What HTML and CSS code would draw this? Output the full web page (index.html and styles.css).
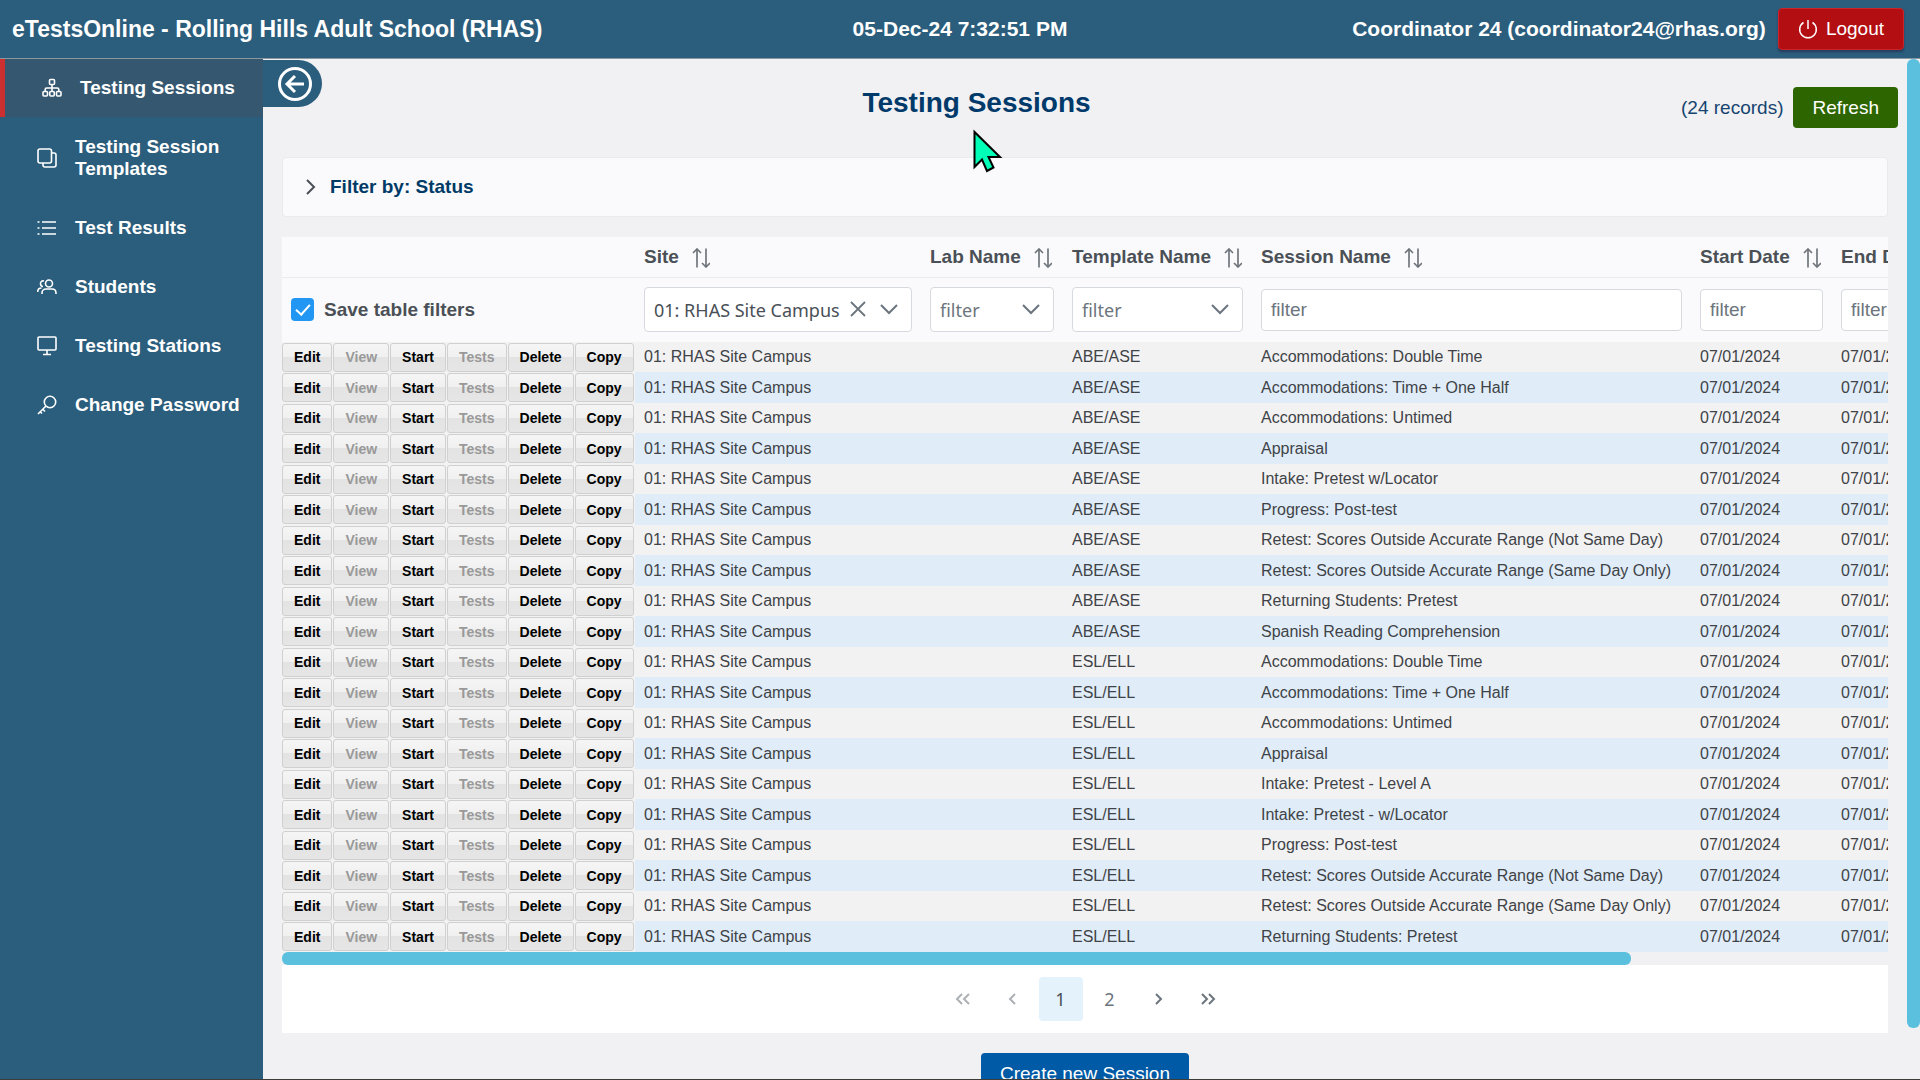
FILE: index.html
```html
<!DOCTYPE html>
<html lang="en">
<head>
  <meta charset="UTF-8" />
  <meta name="viewport" content="width=device-width, initial-scale=1.0"/>
  <title>Testing Sessions - eTestsOnline</title>
  <link rel="stylesheet" href="styles.css">
</head>
<body>
  <svg class="sprite" aria-hidden="true">
    <symbol id="i-sort" viewBox="0 0 18 20">
      <path d="M5 19.5V1M1 5l4-4 4 4M14 .5V19M10 15l4 4 4-4" />
    </symbol>
    <symbol id="i-down" viewBox="0 0 18 12">
      <path d="M1 2l8 8 8-8" />
    </symbol>
  </svg>

  <header class="topbar">
    <div class="brand">eTestsOnline - Rolling Hills Adult School (RHAS)</div>
    <div class="clock">05-Dec-24 7:32:51 PM</div>
    <div class="account">
      <span>Coordinator 24 (coordinator24@rhas.org)</span>
      <button type="button" class="btn logout-btn">
        <svg class="icon" width="20" height="20" viewBox="0 0 20 20"><path d="M10 1v9M5.500 3.500a8.300 8.300 0 1 0 9 0" /></svg>
        Logout
      </button>
    </div>
  </header>

  <div class="layout">
    <nav class="sidebar">
      <a href="#" class="nav-item active">
        <svg class="icon" viewBox="0 0 20 20"><rect x="7.500" y="1.500" width="5" height="5" rx="1"/><rect x="1" y="13.500" width="4.500" height="4.500" rx="1"/><rect x="7.750" y="13.500" width="4.500" height="4.500" rx="1"/><rect x="14.500" y="13.500" width="4.500" height="4.500" rx="1"/><path d="M10 6.500v7M3.200 13.500v-2c0-1 .5-1.500 1.500-1.500h10.600c1 0 1.500.5 1.500 1.500v2"/></svg>
        <span>Testing Sessions</span>
      </a>
      <a href="#" class="nav-item">
        <svg class="icon" viewBox="0 0 20 20"><rect x="1" y="1" width="13.500" height="14" rx="2"/><path d="M15 5h2c1.300 0 2 .7 2 2v10c0 1.300-.7 2-2 2H8c-1.300 0-2-.7-2-2v-2"/></svg>
        <span>Testing Session Templates</span>
      </a>
      <a href="#" class="nav-item">
        <svg class="icon" viewBox="0 0 20 20"><path d="M5 4h14M5 10h14M5 16h14M.5 4h2M.5 10h2M.5 16h2"/></svg>
        <span>Test Results</span>
      </a>
      <a href="#" class="nav-item">
        <svg class="icon" viewBox="0 0 20 20"><circle cx="12" cy="6.500" r="3.500"/><path d="M5 17v-1c0-2.500 2-4 4-4h6c2.500 0 4 1.500 4 4v1M7 4C4.500 3.500 3.500 5 3.500 6.500S4.500 9.500 6 9.500M.7 15c0-3 1-4 3.800-4"/></svg>
        <span>Students</span>
      </a>
      <a href="#" class="nav-item">
        <svg class="icon" viewBox="0 0 20 20"><rect x="1" y="1" width="18" height="13" rx="1"/><path d="M10 14v4.500M6 18.500h8"/></svg>
        <span>Testing Stations</span>
      </a>
      <a href="#" class="nav-item">
        <svg class="icon" viewBox="0 0 20 20"><circle cx="13" cy="7" r="5.700"/><path d="M9 11l-8 8M3 16.500l2 2M5.500 14l2.500 2.500"/></svg>
        <span>Change Password</span>
      </a>
    </nav>

    <main class="main">
      <button type="button" class="collapse-btn" aria-label="Collapse menu">
        <svg width="36" height="36" viewBox="0 0 36 36"><circle cx="18" cy="18" r="15.500"/><path d="M27 18H11M18 10l-8 8 8 8"/></svg>
      </button>

      <div class="page-head">
        <h1 class="page-title">Testing Sessions</h1>
        <span class="records">(24 records)</span>
        <button type="button" class="btn refresh-btn">Refresh</button>
      </div>

      <button type="button" class="filter-panel" aria-expanded="false">
        <svg width="10" height="16" viewBox="0 0 10 16"><path d="M1 1l7 7-7 7"/></svg>
        Filter by: Status
      </button>

      <div class="table-wrap">
        <table class="sessions">
          <colgroup>
            <col class="col-actions"><col class="col-site"><col class="col-lab"><col class="col-template">
            <col class="col-session"><col class="col-date"><col>
          </colgroup>
          <thead>
            <tr class="head-row">
              <th></th>
              <th>Site <svg class="sort"><use href="#i-sort"/></svg></th>
              <th>Lab Name <svg class="sort"><use href="#i-sort"/></svg></th>
              <th>Template Name <svg class="sort"><use href="#i-sort"/></svg></th>
              <th>Session Name <svg class="sort"><use href="#i-sort"/></svg></th>
              <th>Start Date <svg class="sort"><use href="#i-sort"/></svg></th>
              <th>End Date <svg class="sort"><use href="#i-sort"/></svg></th>
            </tr>
            <tr class="filter-row">
              <th>
                <label class="save-filters"><input type="checkbox" checked> Save table filters</label>
              </th>
              <th>
                <div class="dropdown has-value">
                  <select aria-label="Site filter"><option>01: RHAS Site Campus</option></select>
                  <button type="button" class="clear-btn" aria-label="Clear site filter">
                    <svg width="16" height="16" viewBox="0 0 16 16"><path d="M1 1l14 14M15 1L1 15"/></svg>
                  </button>
                  <svg class="arrow"><use href="#i-down"/></svg>
                </div>
              </th>
              <th>
                <div class="dropdown">
                  <select aria-label="Lab name filter"><option>filter</option></select>
                  <svg class="arrow"><use href="#i-down"/></svg>
                </div>
              </th>
              <th>
                <div class="dropdown">
                  <select aria-label="Template name filter"><option>filter</option></select>
                  <svg class="arrow"><use href="#i-down"/></svg>
                </div>
              </th>
              <th><input type="text" class="text-filter" placeholder="filter" aria-label="Session name filter"></th>
              <th><input type="text" class="text-filter" placeholder="filter" aria-label="Start date filter"></th>
              <th><input type="text" class="text-filter" placeholder="filter" aria-label="End date filter"></th>
            </tr>
          </thead>
          <tbody id="session-rows"></tbody>
        </table>
      </div>
      <div class="h-scroll"><div class="h-thumb"></div></div>

      <div class="paginator">
        <button type="button" class="page-btn" disabled aria-label="First page"><svg width="16" height="14" viewBox="0 0 16 14"><path d="M7 2L2 7l5 5M14 2L9 7l5 5"/></svg></button>
        <button type="button" class="page-btn" disabled aria-label="Previous page"><svg width="8" height="14" viewBox="0 0 8 14"><path d="M7 2L2 7l5 5"/></svg></button>
        <button type="button" class="page-btn current">1</button>
        <button type="button" class="page-btn">2</button>
        <button type="button" class="page-btn" aria-label="Next page"><svg width="8" height="14" viewBox="0 0 8 14"><path d="M1 2l5 5-5 5"/></svg></button>
        <button type="button" class="page-btn" aria-label="Last page"><svg width="16" height="14" viewBox="0 0 16 14"><path d="M2 2l5 5-5 5M9 2l5 5-5 5"/></svg></button>
      </div>

      <button type="button" class="btn create-btn">Create new Session</button>

      <svg class="cursor" width="30" height="44" viewBox="0 0 30 44"><path d="M1.500 3v35l7.500-7.500L14 42l6.500-3.500L15.500 28H27z"/></svg>
    </main>
    <div class="v-scroll"><div class="v-thumb"></div></div>
  </div>

  <script src="script.js"></script>
</body>
</html>
```
FILE: styles.css
```css
* {
  margin: 0;
  padding: 0;
  box-sizing: border-box;
}

body {
  display: flex;
  flex-direction: column;
  height: 100vh;
  overflow: hidden;
  font-family: "Liberation Sans", Arial, sans-serif;
  font-size: 19px;
  background: #f1f1f3;
  border-bottom: 1px solid #3c3c38;
}

button, input, select {
  font-family: inherit;
  font-size: inherit;
}

button {
  border: none;
  cursor: pointer;
}

svg {
  fill: none;
  stroke: currentColor;
  stroke-width: 2;
  flex: none;
}

.sprite {
  position: absolute;
  width: 0;
  height: 0;
}

/* Top bar */
.topbar {
  display: grid;
  grid-template-columns: 1fr auto 1fr;
  align-items: center;
  height: 59px;
  flex: none;
  padding: 0 12px;
  background: #2b5d7c;
  border-bottom: 1px solid #8b979f;
  color: #fff;
  font-size: 21px;
  font-weight: bold;
}

.brand {
  font-size: 23px;
}

.account {
  display: flex;
  align-items: center;
  justify-content: flex-end;
  gap: 12px;
  padding-right: 4px;
}

.btn {
  color: #fff;
  font-size: 19px;
  border-radius: 4px;
}

.logout-btn {
  display: flex;
  align-items: center;
  gap: 8px;
  height: 42px;
  padding: 0 19px;
  background: #b30f12;
  border: 1px solid #c9252b;
  box-shadow: 0 2px 2px rgba(30, 30, 70, 0.5);
}

.logout-btn .icon {
  stroke-width: 1.5;
}

.layout {
  display: flex;
  flex: 1;
  min-height: 0;
}

/* Sidebar */
.sidebar {
  display: flex;
  flex-direction: column;
  gap: 1px;
  width: 263px;
  flex: none;
  background: #2b5d7c;
}

.nav-item {
  display: flex;
  align-items: center;
  gap: 18px;
  padding: 18px 18px 18px 37px;
  color: #fff;
  font-size: 19px;
  line-height: 22px;
  font-weight: bold;
  text-decoration: none;
}

.nav-item .icon {
  width: 20px;
  height: 20px;
  stroke-width: 1.6;
}

.nav-item.active {
  background: #355770;
  border-left: 5px solid #cc2f30;
}

/* Main area */
.main {
  position: relative;
  flex: 1;
  min-width: 0;
  padding: 28px 19px 0;
  overflow: hidden;
}

.collapse-btn {
  position: absolute;
  top: 1px;
  left: 0;
  display: flex;
  align-items: center;
  width: 59px;
  height: 47px;
  padding-left: 14px;
  background: #2b5d7c;
  border-radius: 0 24px 24px 0;
  color: #fff;
}

.collapse-btn svg {
  stroke-width: 3;
}

.page-head {
  display: flex;
  align-items: flex-start;
  gap: 10px;
  margin: 0 -10px 29px 0;
}

.page-title {
  flex: 1;
  text-align: center;
  font-size: 28px;
  line-height: 32px;
  color: #003a6b;
}

.records {
  line-height: 41px;
  color: #164470;
}

.refresh-btn {
  height: 41px;
  padding: 0 19px;
  background: #2d6600;
}

.filter-panel {
  display: flex;
  align-items: center;
  gap: 14px;
  width: 100%;
  height: 60px;
  margin-bottom: 20px;
  padding: 0 23px;
  background: #fafafc;
  border: 1px solid #eaeaee;
  border-radius: 4px;
  color: #003a66;
  font-weight: bold;
}

.filter-panel svg {
  color: #495057;
}

/* Sessions table */
.table-wrap {
  overflow: hidden;
}

.sessions {
  width: 119%;
  table-layout: fixed;
  border-collapse: collapse;
  color: #3f4347;
  font-size: 16px;
}

.col-actions { width: 353px; }
.col-site { width: 286px; }
.col-lab { width: 142px; }
.col-template { width: 189px; }
.col-session { width: 439px; }
.col-date { width: 141px; }

.sessions th,
.sessions td {
  padding: 0 9px;
  text-align: left;
  white-space: nowrap;
}

.sessions th {
  background: #fafafc;
  color: #4a5056;
  font-size: 19px;
}

.head-row {
  height: 40px;
  border-bottom: 1px solid #ececf0;
}

.filter-row {
  height: 65px;
}

.sort {
  width: 18px;
  height: 20px;
  margin-left: 8px;
  vertical-align: middle;
  color: #70767c;
  stroke-width: 1.7;
}

.save-filters {
  display: flex;
  align-items: center;
  gap: 10px;
}

.save-filters input {
  appearance: none;
  width: 23px;
  height: 23px;
  border-radius: 4px;
  background: #2196f3;
  display: grid;
  place-items: center;
}

.save-filters input::after {
  content: "";
  width: 6px;
  height: 12px;
  margin-bottom: 3px;
  border: solid #fff;
  border-width: 0 2px 2px 0;
  transform: rotate(42deg);
}

.dropdown {
  position: relative;
}

.dropdown select {
  display: block;
  appearance: none;
  width: 100%;
  height: 45px;
  padding: 0 9px;
  background: #fff;
  border: 1px solid #d6d9de;
  border-radius: 4px;
  color: #6c757d;
  font-family: "Noto Sans", sans-serif;
  font-size: 18px;
}

.dropdown.has-value select {
  color: #495057;
}

.arrow {
  position: absolute;
  top: 16px;
  right: 14px;
  width: 18px;
  height: 12px;
  color: #6c757d;
  pointer-events: none;
}

.clear-btn {
  position: absolute;
  top: 14px;
  right: 46px;
  display: flex;
  background: none;
  color: #6c757d;
}

.clear-btn svg {
  stroke-width: 1.8;
}

.text-filter {
  display: block;
  width: 100%;
  height: 42px;
  padding: 0 9px;
  background: #fff;
  border: 1px solid #d6d9de;
  border-radius: 4px;
}

.text-filter::placeholder {
  color: #6c757d;
}

.sessions tbody tr {
  height: 30px;
  background: #f2f2f3;
}

.sessions tbody tr:nth-child(even) {
  height: 31px;
  background: #e0edf9;
}

.sessions td.actions {
  padding: 0;
  background: #f2f2f3;
}

.action-group {
  display: flex;
  gap: 1px;
}

.action-btn {
  height: 29px;
  padding: 0 11px;
  border: 1px solid #d0d0d0;
  border-radius: 3px;
  background: linear-gradient(#f5f5f5 0%, #f0f0f0 50%, #e3e3e3 50%, #e6e6e6 100%);
  color: #000;
  font-size: 14px;
  font-weight: bold;
}

.action-btn:disabled {
  color: #999;
  cursor: default;
}

.h-thumb {
  width: 84%;
  height: 13px;
  border-radius: 6px;
  background: #5bc0de;
}

/* Paginator */
.paginator {
  display: flex;
  justify-content: center;
  gap: 5px;
  padding: 12px;
  background: #fff;
}

.page-btn {
  display: flex;
  align-items: center;
  justify-content: center;
  width: 44px;
  height: 44px;
  border-radius: 4px;
  background: none;
  color: #6c757d;
  font-family: "Noto Sans", sans-serif;
  font-size: 18px;
}

.page-btn:disabled {
  color: #adb1b5;
}

.page-btn.current {
  background: #e3f2fb;
  color: #495057;
}

.create-btn {
  display: block;
  height: 42px;
  margin: 20px auto 0;
  padding: 0 19px;
  background: #005aa5;
}

.cursor {
  position: absolute;
  top: 70px;
  left: 710px;
  fill: #00ffb7;
  stroke: #000;
}

.v-scroll {
  width: 13px;
  flex: none;
}

.v-thumb {
  height: 95%;
  border-radius: 6px;
  background: #5bc0de;
}
```
FILE: script.js
```javascript
const site = "01: RHAS Site Campus";
const startDate = "07/01/2024";

const sessions = [
  ["ABE/ASE", "Accommodations: Double Time"],
  ["ABE/ASE", "Accommodations: Time + One Half"],
  ["ABE/ASE", "Accommodations: Untimed"],
  ["ABE/ASE", "Appraisal"],
  ["ABE/ASE", "Intake: Pretest w/Locator"],
  ["ABE/ASE", "Progress: Post-test"],
  ["ABE/ASE", "Retest: Scores Outside Accurate Range (Not Same Day)"],
  ["ABE/ASE", "Retest: Scores Outside Accurate Range (Same Day Only)"],
  ["ABE/ASE", "Returning Students: Pretest"],
  ["ABE/ASE", "Spanish Reading Comprehension"],
  ["ESL/ELL", "Accommodations: Double Time"],
  ["ESL/ELL", "Accommodations: Time + One Half"],
  ["ESL/ELL", "Accommodations: Untimed"],
  ["ESL/ELL", "Appraisal"],
  ["ESL/ELL", "Intake: Pretest - Level A"],
  ["ESL/ELL", "Intake: Pretest - w/Locator"],
  ["ESL/ELL", "Progress: Post-test"],
  ["ESL/ELL", "Retest: Scores Outside Accurate Range (Not Same Day)"],
  ["ESL/ELL", "Retest: Scores Outside Accurate Range (Same Day Only)"],
  ["ESL/ELL", "Returning Students: Pretest"]
];

const actions = ["Edit", "View", "Start", "Tests", "Delete", "Copy"];
const disabledActions = ["View", "Tests"];

const buttons = actions.map(name =>
  `<button type="button" class="action-btn"${disabledActions.includes(name) ? " disabled" : ""}>${name}</button>`
).join("");

document.getElementById("session-rows").innerHTML = sessions.map(([template, name]) => `
  <tr>
    <td class="actions"><div class="action-group">${buttons}</div></td>
    <td>${site}</td>
    <td></td>
    <td>${template}</td>
    <td>${name}</td>
    <td>${startDate}</td>
    <td>07/01/2025</td>
  </tr>`).join("");
```
